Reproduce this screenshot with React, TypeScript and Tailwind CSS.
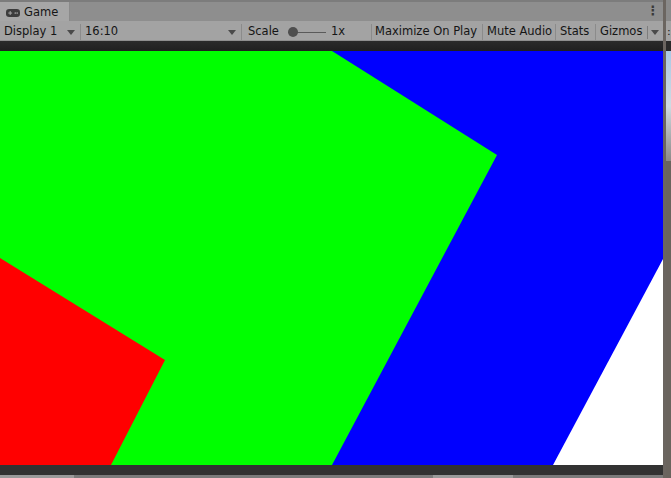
import React from 'react'

const font = { fontFamily: '"DejaVu Sans", Verdana, sans-serif' }

function Arrow() {
    return (
        <svg width="8" height="5" viewBox="0 0 8 5" className="shrink-0">
            <path d="M0 0 H8 L4 5 Z" fill="#4a4a4a" />
        </svg>
    )
}

function GamepadIcon() {
    return (
        <svg width="14" height="8" viewBox="0 0 14 8">
            <rect x="0" y="0" width="14" height="8" rx="3.2" fill="#3c3c3c" />
            <rect x="2.3" y="3.5" width="3.8" height="1.1" fill="#a0a0a0" />
            <rect x="3.65" y="2.1" width="1.1" height="3.8" fill="#a0a0a0" />
            <circle cx="9.3" cy="4" r="0.85" fill="#a0a0a0" />
            <circle cx="11.2" cy="4" r="0.85" fill="#a0a0a0" />
        </svg>
    )
}

function Sep() {
    return <div className="w-px self-stretch bg-[#8b8b8b]" />
}

function GameView() {
    return (
        <svg width="663" height="414" viewBox="0 0 663 414" className="block">
            <rect width="663" height="414" fill="#0000ff" />
            <polygon points="0,0 332,0 497,104 332,414 0,414" fill="#00ff00" />
            <polygon points="0,207 165,309 111,414 0,414" fill="#ff0000" />
            <polygon points="663,208 553,414 663,414" fill="#ffffff" />
        </svg>
    )
}

export default function App() {
    return (
        <div className="w-[671px] h-[478px] flex bg-[#6a645e] overflow-hidden text-[11.5px] text-[#151515]" style={font}>
            <div className="w-[663px] flex flex-col shrink-0">
                {/* tab strip */}
                <div className="h-[21px] flex bg-[#8e8e8e] border-t-2 border-[#7c7c7c]">
                    <div className="w-[70px] flex flex-col bg-[#a6a6a6] border-r border-[#8a8a8a]">
                        <div className="h-[2px] bg-[#3d7cc4]" />
                        <div className="flex-1 flex items-center gap-[4px] pl-[6px] pt-[2px]">
                            <GamepadIcon />
                            <span className="text-[11.5px]">Game</span>
                        </div>
                    </div>
                    <div className="flex-1" />
                    <div className="w-[20px] flex items-center justify-center text-[#3a3a3a] text-[13px] font-bold leading-none pb-[3px]">⋮</div>
                </div>

                {/* toolbar */}
                <div className="h-[20px] flex items-center bg-[#a3a3a3] border-b border-[#8f8f8f] pt-[3px]">
                    <div className="w-[80px] flex items-center justify-between pl-[4px] pr-[5px]">
                        <span>Display 1</span>
                        <Arrow />
                    </div>
                    <Sep />
                    <div className="w-[160px] flex items-center justify-between pl-[4px] pr-[5px]">
                        <span>16:10</span>
                        <Arrow />
                    </div>
                    <Sep />
                    <div className="w-[129px] flex items-center pl-[6px]">
                        <span>Scale</span>
                        <div className="relative ml-[9px] w-[38px] h-[10px] flex items-center">
                            <div className="w-full h-px bg-[#5a5a5a]" />
                            <div className="absolute left-0 w-[10px] h-[10px] rounded-full bg-[#4f4f4f]" />
                        </div>
                        <span className="ml-[5px]">1x</span>
                    </div>
                    <Sep />
                    <div className="w-[110px] pl-[3px]">Maximize On Play</div>
                    <Sep />
                    <div className="w-[72px] pl-[4px]">Mute Audio</div>
                    <Sep />
                    <div className="w-[39px] pl-[4px]">Stats</div>
                    <Sep />
                    <div className="flex-1 flex items-center pl-[4px]">
                        <span>Gizmos</span>
                        <div className="ml-[5px] w-px h-[13px] bg-[#7d7d7d]" />
                        <div className="ml-[3px]">
                            <Arrow />
                        </div>
                    </div>
                </div>

                {/* dark band */}
                <div className="h-[10px] bg-gradient-to-b from-[#2b2b2b] to-[#202020]" />

                <GameView />

                <div className="h-[10px] bg-[#323232]" />
                <div className="flex-1 flex bg-[#7b7b7b]">
                    <div className="w-[74px] bg-[#9a9a9a]" />
                    <div className="flex-1" />
                    <div className="w-[80px] bg-[#9a9a9a] mr-[150px]" />
                </div>
            </div>

            {/* right neighbour window */}
            <div className="flex-1 flex">
                <div className="w-[3px] bg-[#6b6560]" />
                <div className="flex-1 flex flex-col">
                    <div className="h-[21px] bg-[#8a8a8a]" />
                    <div className="h-[20px] bg-[#a3a3a3] text-[11px] leading-[22px] pl-px">:</div>
                    <div className="h-[10px] bg-[#2a2a2a]" />
                    <div className="h-[110px] bg-gradient-to-b from-[#a9c8e4] via-[#cfdbe2] to-[#8c8a88]" />
                    <div className="flex-1 bg-[#6a645e]" />
                </div>
            </div>
        </div>
    )
}
